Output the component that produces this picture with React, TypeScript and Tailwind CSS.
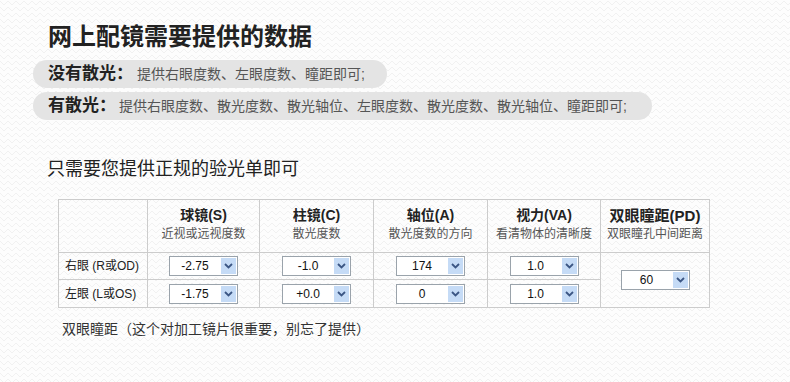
import React from "react";

const cjk = "font-['Liberation_Sans','Noto_Sans_CJK_SC',sans-serif]";

function Chevron() {
  return (
    <svg width="9" height="6" viewBox="0 0 9 6" className="block">
      <path d="M1 1 L4.5 4.5 L8 1" fill="none" stroke="#3b5684" strokeWidth="1.8" />
    </svg>
  );
}

function FakeSelect({ value }: { value: string }) {
  return (
    <div className="mx-auto flex h-[20px] w-[69px] border border-[#9aa3ab] bg-white">
      <span className="flex-1 text-center text-[12px] leading-[18px] text-[#111] font-['Liberation_Sans',sans-serif]">
        {value}
      </span>
      <span className="m-px flex w-[15px] items-center justify-center bg-[#c5dbf6]">
        <Chevron />
      </span>
    </div>
  );
}

const columns = [
  { title: "球镜(S)", sub: "近视或远视度数", r: "-2.75", l: "-1.75", w: "w-[112px]" },
  { title: "柱镜(C)", sub: "散光度数", r: "-1.0", l: "+0.0", w: "w-[114px]" },
  { title: "轴位(A)", sub: "散光度数的方向", r: "174", l: "0", w: "w-[114px]" },
  { title: "视力(VA)", sub: "看清物体的清晰度", r: "1.0", l: "1.0", w: "w-[113px]" },
];

export default function App() {
  return (
    <div
      className={`min-h-[382px] w-full pt-[21px] ${cjk} text-[#333] bg-[#f1f1f1] bg-[linear-gradient(135deg,#fdfdfd_32%,transparent_32%),linear-gradient(225deg,#fdfdfd_32%,transparent_32%),linear-gradient(315deg,#fdfdfd_32%,transparent_32%),linear-gradient(45deg,#fdfdfd_32%,transparent_32%)] bg-[length:8px_6px] bg-[position:-4px_0,-4px_0,0_0,0_0]`}
    >
      <h1 className="pl-[48px] text-[24px] font-bold leading-[32px] text-[#222]">
        网上配镜需要提供的数据
      </h1>

      <div className="mt-[7px] ml-[33px] flex flex-col items-start gap-[4px]">
        <div className="flex h-[28px] items-center rounded-full bg-[#e4e4e4] pl-[15px] pr-[22px]">
          <span className="text-[17px] font-bold text-[#222]">没有散光：</span>
          <span className="ml-[4px] text-[14px] text-[#555]">提供右眼度数、左眼度数、瞳距即可;</span>
        </div>
        <div className="flex h-[28px] items-center rounded-full bg-[#e4e4e4] pl-[15px] pr-[25px]">
          <span className="text-[17px] font-bold text-[#222]">有散光：</span>
          <span className="ml-[3px] text-[14px] text-[#555]">
            提供右眼度数、散光度数、散光轴位、左眼度数、散光度数、散光轴位、瞳距即可;
          </span>
        </div>
      </div>

      <p className="mt-[37px] pl-[47px] text-[18px] leading-[24px] text-[#222]">只需要您提供正规的验光单即可</p>

      <table className="mt-[18px] ml-[58px] w-[651px] table-fixed border-collapse border border-[#cccccc]">
        <colgroup>
          <col className="w-[89px]" />
          {columns.map((c) => (
            <col key={c.title} className={c.w} />
          ))}
          <col className="w-[109px]" />
        </colgroup>
        <thead>
          <tr className="h-[53px]">
            <th className="border border-[#cccccc]"></th>
            {columns.map((c) => (
              <th key={c.title} className="border border-[#cccccc] pb-[2px] text-center align-middle">
                <div className="text-[14px] font-bold leading-[19px] text-[#222]">{c.title}</div>
                <div className="text-[12px] font-normal leading-[19px] text-[#555]">{c.sub}</div>
              </th>
            ))}
            <th className="border border-[#cccccc] pb-[2px] text-center align-middle">
              <div className="text-[15px] font-bold leading-[19px] text-[#222]">双眼瞳距(PD)</div>
              <div className="text-[12px] font-normal leading-[19px] text-[#555]">双眼瞳孔中间距离</div>
            </th>
          </tr>
        </thead>
        <tbody>
          <tr className="h-[27px]">
            <td className="border border-[#cccccc] pl-[6px] text-[12px] text-[#222]">右眼 (R或OD)</td>
            {columns.map((c) => (
              <td key={c.title} className="border border-[#cccccc]">
                <FakeSelect value={c.r} />
              </td>
            ))}
            <td rowSpan={2} className="border border-[#cccccc] align-middle">
              <FakeSelect value="60" />
            </td>
          </tr>
          <tr className="h-[28px]">
            <td className="border border-[#cccccc] pl-[6px] text-[12px] text-[#222]">左眼 (L或OS)</td>
            {columns.map((c) => (
              <td key={c.title} className="border border-[#cccccc]">
                <FakeSelect value={c.l} />
              </td>
            ))}
          </tr>
        </tbody>
      </table>

      <p className="mt-[11px] pl-[62px] text-[14px] leading-[20px] text-[#333]">
        双眼瞳距（这个对加工镜片很重要，别忘了提供）
      </p>
    </div>
  );
}
